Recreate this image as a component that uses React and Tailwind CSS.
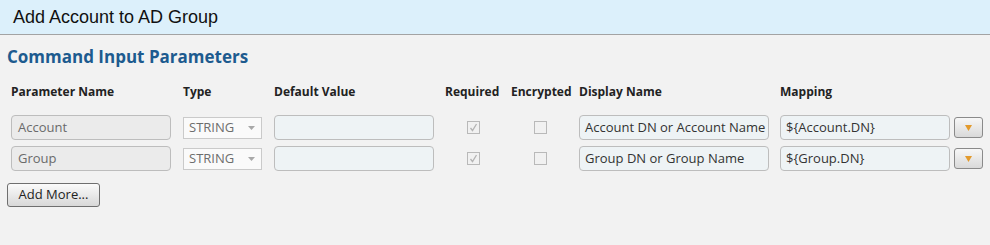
import React from 'react';

const rows = [
  { name: 'Account', display: 'Account DN or Account Name', mapping: '${Account.DN}' },
  { name: 'Group', display: 'Group DN or Group Name', mapping: '${Group.DN}' },
];

const Check = ({ checked }) => (
  <div className="w-[13px] h-[13px] border border-[#b9b9b9] bg-[#f1f1f1] flex items-center justify-center">
    {checked && (
      <svg width="9" height="9" viewBox="0 0 9 9">
        <path d="M1.5 5 L3.5 7.5 L7.5 1" fill="none" stroke="#b4b4b4" strokeWidth="1.3" />
      </svg>
    )}
  </div>
);

const ParamRow = ({ row }) => (
  <div className="flex items-center h-[25px]">
    <div className="w-[172px]">
      <div className="w-[160px] h-[25px] border border-[#bdbdbd] bg-[#ebebeb] rounded-[4px] px-[6px] flex items-center text-[13px] text-[#6a6a6a]">
        {row.name}
      </div>
    </div>
    <div className="w-[91px]">
      <div className="w-[79px] h-[22px] border border-[#cacaca] bg-[#fafafa] flex items-center justify-between pl-[5px] pr-[6px] text-[13px] text-[#6d6d6d]">
        <span>STRING</span>
        <svg width="7" height="4" viewBox="0 0 7 4">
          <path d="M0 0 L7 0 L3.5 4 Z" fill="#a8a8a8" />
        </svg>
      </div>
    </div>
    <div className="w-[171px]">
      <div className="w-[160px] h-[25px] border border-[#bdbdbd] bg-[#eef3f5] rounded-[4px]" />
    </div>
    <div className="w-[66px] pl-[22px]">
      <Check checked />
    </div>
    <div className="w-[68px] pl-[23px]">
      <Check />
    </div>
    <div className="w-[201px]">
      <div className="w-[190px] h-[25px] border border-[#bdbdbd] bg-[#eef3f5] rounded-[4px] px-[5px] flex items-center text-[13px] text-[#333] whitespace-nowrap">
        {row.display}
      </div>
    </div>
    <div className="w-[174px]">
      <div className="w-[170px] h-[25px] border border-[#bdbdbd] bg-[#eef3f5] rounded-[4px] px-[5px] flex items-center text-[13px] text-[#333]">
        {row.mapping}
      </div>
    </div>
    <button className="w-[29px] h-[21px] border border-[#8a8a8a] rounded-[3px] bg-gradient-to-b from-[#f7f7f7] to-[#d9d9d9] flex items-center justify-center">
      <svg width="7" height="6" viewBox="0 0 7 6">
        <path d="M0 0 L7 0 L3.5 6 Z" fill="#e39a2c" />
      </svg>
    </button>
  </div>
);

export default function App() {
  return (
    <div className="w-[990px] h-[245px] bg-[#f2f2f2] font-['Open_Sans',sans-serif] overflow-hidden">
      <div className="h-[35px] bg-[#dcf0fb] border-b border-[#a3a3a3] flex items-center pl-[13px]">
        <span className="font-['Liberation_Sans',Arial,sans-serif] text-[18px] text-[#111]">
          Add Account to AD Group
        </span>
      </div>
      <div className="pl-[7px] pt-[10px] text-[17px] font-bold text-[#1d5b8f] leading-[23px]">
        Command Input Parameters
      </div>
      <div className="pl-[11px] pt-[16px]">
        <div className="flex items-center h-[16px] text-[12px] font-bold text-[#222]">
          <div className="w-[172px]">Parameter Name</div>
          <div className="w-[91px]">Type</div>
          <div className="w-[171px]">Default Value</div>
          <div className="w-[66px]">Required</div>
          <div className="w-[68px]">Encrypted</div>
          <div className="w-[201px]">Display Name</div>
          <div className="w-[174px]">Mapping</div>
        </div>
        <div className="mt-[15px] flex flex-col gap-[6px]">
          {rows.map((r) => (
            <ParamRow key={r.name} row={r} />
          ))}
        </div>
      </div>
      <div className="pl-[7px] pt-[12px]">
        <button className="w-[93px] h-[24px] border border-[#6f6f6f] rounded-[3px] bg-gradient-to-b from-[#fbfbfb] to-[#d8d8d8] text-[13px] text-[#222] flex items-center justify-center">
          Add More...
        </button>
      </div>
    </div>
  );
}
